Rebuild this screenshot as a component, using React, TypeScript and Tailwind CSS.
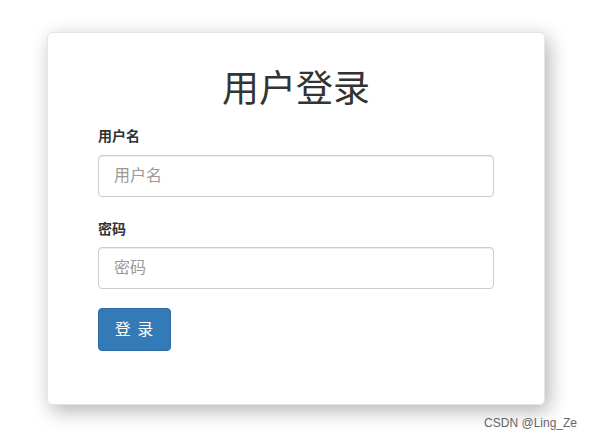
import React from 'react'

const font = "font-['Liberation_Sans','Noto_Sans_CJK_SC',sans-serif]"

export default function App() {
  return (
    <div className={`relative w-[592px] h-[440px] bg-white ${font} text-[#333]`}>
      <div className="pt-[32px] pl-[47px]">
        <div className="w-[498px] h-[373px] bg-white rounded-[5px] border border-[#e5e5e5] shadow-[4px_6px_20px_rgba(0,0,0,0.3)] px-[50px] pt-[36px]">
          <h1 className="text-center text-[37px] leading-[42px] font-normal text-[#333]">用户登录</h1>
          <form className="mt-[15px]" onSubmit={(e) => e.preventDefault()}>
            <label className="block text-[14px] leading-[20px] font-bold mb-[9px]">用户名</label>
            <input
              type="text"
              placeholder="用户名"
              className="block w-full h-[42px] px-[15px] text-[16px] rounded-[4px] border border-[#ccc] shadow-[inset_0_1px_1px_rgba(0,0,0,0.075)] placeholder:text-[#999] outline-none"
            />
            <label className="block mt-[22px] text-[14px] leading-[20px] font-bold mb-[8px]">密码</label>
            <input
              type="password"
              placeholder="密码"
              className="block w-full h-[42px] px-[15px] text-[16px] rounded-[4px] border border-[#ccc] shadow-[inset_0_1px_1px_rgba(0,0,0,0.075)] placeholder:text-[#999] outline-none"
            />
            <button
              type="submit"
              className="mt-[19px] w-[73px] h-[43px] rounded-[4px] bg-[#337ab7] border border-[#2e6da4] text-white text-[16px] tracking-[1px]"
            >
              登 录
            </button>
          </form>
        </div>
      </div>
      <div className="absolute right-[15px] top-[414px] text-[12px] leading-[18px] text-[#666]">CSDN @Ling_Ze</div>
    </div>
  )
}
